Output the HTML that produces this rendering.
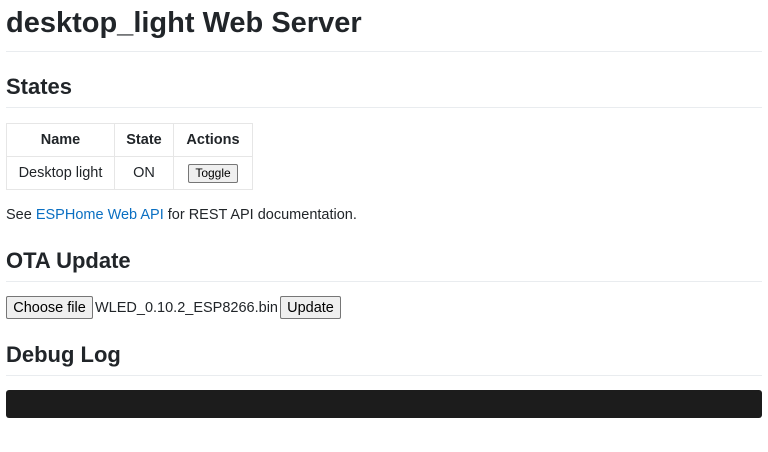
<!DOCTYPE html>
<html><head><style>
body{margin:0;width:768px;height:452px;background:#fff;font-family:"Liberation Sans",Arial,sans-serif;color:#212529;position:relative;overflow:hidden}
.a{position:absolute;white-space:nowrap}
h1,h2{margin:0;font-weight:bold}
.hr{position:absolute;left:6px;right:6px;height:1px;background:#e9ecef}
table{border-collapse:collapse;font-size:14.5px;table-layout:fixed;width:246px}
td,th{border:1px solid #e6e6e6;padding:0;text-align:center;height:32px}
button{font-family:"Liberation Sans",Arial,sans-serif;background:#efefef;border:1px solid #767676;border-radius:2px;color:#000;padding:0}
a{color:#0a6fc2;text-decoration:none}
</style></head><body>
<h1 class="a" style="left:6px;top:6px;font-size:29px;line-height:34px">desktop_light Web Server</h1>
<div class="hr" style="top:51px"></div>
<h2 class="a" style="left:6px;top:74px;font-size:22px;line-height:26px">States</h2>
<div class="hr" style="top:107px"></div>
<table class="a" style="left:6px;top:123px">
<colgroup><col style="width:108px"><col style="width:59px"><col style="width:79px"></colgroup>
<tr><th>Name</th><th>State</th><th>Actions</th></tr>
<tr><td>Desktop light</td><td>ON</td><td><button style="font-size:12px;width:50px;height:19px">Toggle</button></td></tr>
</table>
<div class="a" style="left:6px;top:206px;font-size:14.5px;line-height:18px">See <a>ESPHome Web API</a> for REST API documentation.</div>
<h2 class="a" style="left:6px;top:248px;font-size:22px;line-height:26px">OTA Update</h2>
<div class="hr" style="top:281px"></div>
<div class="a" style="left:6px;top:296px;font-size:14.5px;display:flex;align-items:center">
<button style="font-size:14.5px;width:87px;height:23px">Choose file</button><span style="margin:0 2px">WLED_0.10.2_ESP8266.bin</span><button style="font-size:14.5px;width:61px;height:23px">Update</button></div>
<h2 class="a" style="left:6px;top:342px;font-size:22px;line-height:26px">Debug Log</h2>
<div class="hr" style="top:375px"></div>
<div class="a" style="left:6px;top:390px;width:756px;height:28px;background:#1c1c1c;border-radius:3px"></div>
</body></html>
